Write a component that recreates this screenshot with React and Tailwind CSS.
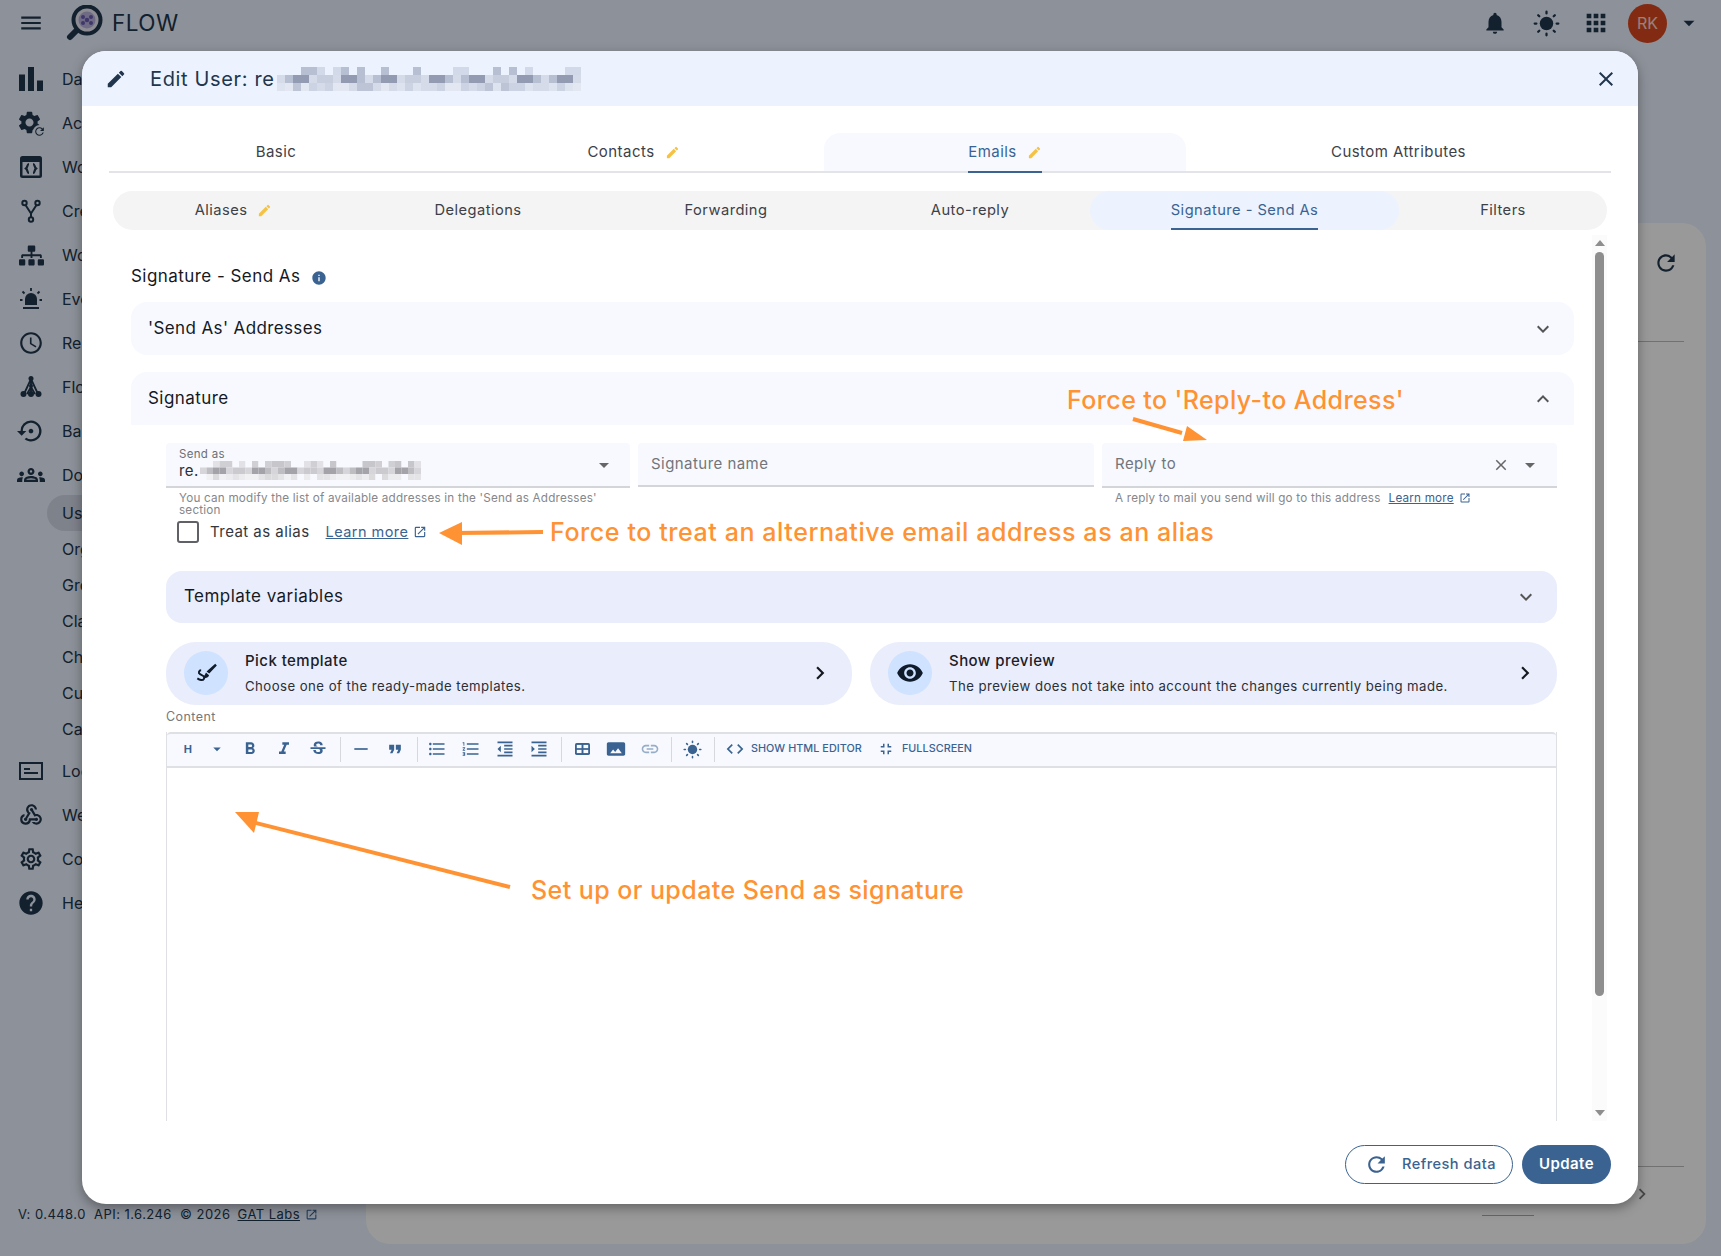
import React from 'react';
import {
  MdMenu, MdBarChart, MdSettings, MdRefresh, MdOutlineAccessTime, MdSettingsBackupRestore, MdOutlineGroups,
  MdWebhook, MdOutlineSettings, MdHelp, MdNotifications, MdApps, MdArrowDropDown, MdEdit, MdClose, MdInfo,
  MdExpandMore, MdExpandLess, MdOutlineOpenInNew, MdChevronRight, MdVisibility, MdFormatBold, MdFormatItalic,
  MdStrikethroughS, MdHorizontalRule, MdFormatQuote, MdFormatListBulleted, MdFormatListNumbered,
  MdFormatIndentDecrease, MdFormatIndentIncrease, MdPanorama, MdLink, MdCode, MdFullscreenExit,
} from 'react-icons/md';
import { FaSitemap } from 'react-icons/fa';

const Sun = ({ className }) => (
  <svg viewBox="0 0 24 24" className={className} fill="currentColor">
    <circle cx="12" cy="12" r="6" />
    <g stroke="currentColor" strokeWidth="2" strokeLinecap="round">
      <path d="M12 1.5v1.5M12 21v1.5M1.5 12H3M21 12h1.5M4.6 4.6l1 1M18.4 18.4l1 1M4.6 19.4l1-1M18.4 5.6l1-1" />
    </g>
  </svg>
);

const Logo = () => (
  <svg viewBox="0 0 37 36" className="w-[37px] h-[36px]">
    <path d="M10 26L4 32" stroke="#21364d" strokeWidth="6" strokeLinecap="round" />
    <circle cx="21" cy="15" r="13.5" fill="#eceaf6" stroke="#21364d" strokeWidth="4" />
    <circle cx="21" cy="15" r="8.5" fill="#b9b3dc" />
    <g fill="#6a5bb0">
      <circle cx="17" cy="12" r="2" />
      <circle cx="25" cy="12" r="2" />
      <circle cx="21" cy="15" r="2.2" />
      <circle cx="17" cy="18" r="2" />
      <circle cx="25" cy="18" r="2" />
    </g>
  </svg>
);

const CogSync = () => (
  <span className="relative block w-[26px] h-[26px]">
    <MdSettings className="w-[27px] h-[27px] -ml-[2px] -mt-[1px]" />
    <span className="absolute right-[-2px] bottom-[-2px] rounded-full bg-[#ebf2ff]">
      <MdRefresh className="w-[13px] h-[13px]" />
    </span>
  </span>
);

const CodeWindow = () => (
  <svg viewBox="0 0 24 24" className="w-[24px] h-[24px]">
    <rect x="1" y="1" width="22" height="22" rx="2.5" fill="currentColor" />
    <rect x="3.500" y="7" width="17" height="13.500" fill="#ebf2ff" />
    <path d="M10 9c-2 0-1 3-3 4.500 2 1.500 1 4.500 3 4.500M14 9c2 0 1 3 3 4.500-2 1.500-1 4.500-3 4.500" fill="none" stroke="currentColor" strokeWidth="2.200" />
  </svg>
);

const ForkIcon = () => (
  <svg viewBox="0 0 24 24" className="w-[24px] h-[24px]" fill="none" stroke="currentColor" strokeWidth="2">
    <circle cx="5.500" cy="4" r="2.200" />
    <circle cx="18.500" cy="4" r="2.200" />
    <circle cx="12" cy="20.500" r="2.200" />
    <path d="M6.500 6L12 14.500 17.500 6M12 14.500v3.800" />
  </svg>
);

const Siren = () => (
  <svg viewBox="0 0 24 24" className="w-[24px] h-[24px]" fill="currentColor">
    <path d="M6 18v-6a6 6 0 0 1 12 0v6z" />
    <rect x="4" y="20" width="16" height="2" />
    <path d="M12 1v3M3.500 4.500l2 2M20.500 4.500l-2 2M1 13h2.500M20.500 13H23" stroke="currentColor" strokeWidth="1.800" />
  </svg>
);

const FlowTree = () => (
  <svg viewBox="0 0 24 24" className="w-[24px] h-[24px]" fill="currentColor">
    <path d="M12 4L5 19M12 4v15M12 4l7 15M12 12l-4 7M12 12l4 7" stroke="currentColor" strokeWidth="1.800" fill="none" />
    <circle cx="12" cy="3.500" r="2.500" />
    <circle cx="12" cy="11" r="2" />
    <circle cx="4.500" cy="19" r="3" />
    <circle cx="12" cy="19" r="3" />
    <circle cx="19.500" cy="19" r="3" />
  </svg>
);

const LogBox = () => (
  <svg viewBox="0 0 24 24" className="w-[24px] h-[24px]" fill="none" stroke="currentColor">
    <rect x="1" y="4" width="22" height="16" strokeWidth="2" />
    <path d="M5 10h6M5 14h14" strokeWidth="1.800" />
  </svg>
);

const TableIcon = () => (
  <svg viewBox="0 0 14 11" className="w-[15px] h-[12px]">
    <rect width="14" height="11" rx="1.500" fill="currentColor" />
    <rect x="1.700" y="1.700" width="4.400" height="3" fill="#f7f9ff" />
    <rect x="7.900" y="1.700" width="4.400" height="3" fill="#f7f9ff" />
    <rect x="1.700" y="6.300" width="4.400" height="3" fill="#f7f9ff" />
    <rect x="7.900" y="6.300" width="4.400" height="3" fill="#f7f9ff" />
  </svg>
);

const PickIcon = () => (
  <svg viewBox="0 0 24 24" className="w-[26px] h-[26px]" fill="#0f1a2a">
    <path d="M20.500 3.500l1.500 1.500-7 7.500-2.500-2z" />
    <path d="M12 11.500l2.800 2.500c-.6 2-2.400 3-4.800 2.400l-1-.6c1.500-.6 2-2.500 3-4.300z" />
    <path d="M7.500 9.500c-2 0-3 2.300-1 3.500l3 1.800c2 1.300.4 4-2 3.700-1.300-.2-2.500-.8-3.500-1.500" fill="none" stroke="#0f1a2a" strokeWidth="1.800" />
  </svg>
);

// pixelated block that hides the address in the reference
const Censor = ({ cols, size, rowsShades, className }) => {
  const cells = [];
  rowsShades.forEach((shades, r) => {
    for (let c = 0; c < cols; c++) {
      const v = (c * 7 + r * 13 + ((c * c) % 11) + ((c * (r + 2)) % 5)) % shades.length;
      cells.push(<rect key={`${r}-${c}`} x={c * size} y={r * size} width={size} height={size} fill={shades[v]} />);
    }
  });
  return (
    <svg viewBox={`0 0 ${cols * size} ${rowsShades.length * size}`} width={cols * size} height={rowsShades.length * size} className={className}>
      {cells}
    </svg>
  );
};

const titleShades = [
  ['#ecf2fe', '#b7bfd2', '#ecf2fe', '#d2d9e8', '#ecf2fe'],
  ['#a9b1c6', '#c7cede', '#939bb3', '#d5dbe8', '#b7bfd2'],
  ['#ccd3e2', '#dde3ef', '#bcc4d6', '#e2e7f2', '#d5dbe8'],
];
const fieldShades = [
  ['#f7f9ff', '#cfcfd4', '#e2e2e6', '#f7f9ff', '#c6c6cb'],
  ['#b4b4b9', '#cbcbcf', '#a3a3a9', '#d6d6da', '#bdbdc2'],
  ['#ececee', '#f7f9ff', '#dbdbde', '#f1f1f4', '#e4e4e7'],
];

const navTop = [
  [<MdBarChart className="w-[36px] h-[36px]" />, 'Dashboard'],
  [<CogSync />, 'Activities'],
  [<CodeWindow />, 'Workspace'],
  [<ForkIcon />, 'Create'],
  [<FaSitemap className="w-[25px] h-[25px]" />, 'Workflows'],
  [<Siren />, 'Events'],
  [<MdOutlineAccessTime className="w-[26px] h-[26px]" />, 'Reports'],
  [<FlowTree />, 'Flow'],
  [<MdSettingsBackupRestore className="w-[28px] h-[28px]" />, 'Backups'],
  [<MdOutlineGroups className="w-[28px] h-[28px]" />, 'Domain'],
];
const navSub = ['Users', 'Org Units', 'Groups', 'Classroom', 'Chrome', 'Custom', 'Calendars'];
const navBottom = [
  [<LogBox />, 'Logs'],
  [<MdWebhook className="w-[26px] h-[26px]" />, 'Webhooks'],
  [<MdOutlineSettings className="w-[26px] h-[26px]" />, 'Config'],
  [<MdHelp className="w-[28px] h-[28px]" />, 'Help'],
];

const mainTabs = [
  { label: 'Basic', w: 'w-[334px]' },
  { label: 'Contacts', w: 'w-[381px]', edited: true },
  { label: 'Emails', w: 'w-[362px]', edited: true, active: true },
  { label: 'Custom Attributes', w: 'w-[425px]' },
];
const subTabs = [
  { label: 'Aliases', w: 'w-[241px]', edited: true },
  { label: 'Delegations', w: 'w-[248px]' },
  { label: 'Forwarding', w: 'w-[248px]' },
  { label: 'Auto-reply', w: 'w-[240px]' },
  { label: 'Signature - Send As', w: 'w-[309px]', active: true },
  { label: 'Filters', w: 'w-[208px]' },
];

const ToolBtn = ({ className = '', children }) => (
  <span className={`w-[34px] shrink-0 flex items-center justify-center ${className}`}>{children}</span>
);
const ToolDivider = ({ className = '' }) => <span className={`block w-px h-[25px] bg-[#d6d8de] shrink-0 ${className}`} />;

function Sidebar() {
  return (
    <aside className="w-[366px] shrink-0 pt-[11px] text-[#21364d]">
      {navTop.map(([icon, label]) => (
        <div key={label} className="h-[44px] flex items-center">
          <span className="w-[62px] flex justify-center shrink-0">{icon}</span>
          <span className="text-[16px] whitespace-nowrap">{label}</span>
        </div>
      ))}
      <div className="-mt-[2px] mb-[2px]">
        {navSub.map((label, i) => (
          <div key={label} className={`h-[36px] flex items-center pl-[15px] ml-[47px] mr-[24px] whitespace-nowrap text-[16px] ${i === 0 ? 'bg-[#d3d9e8] rounded-full' : ''}`}>
            {label}
          </div>
        ))}
      </div>
      {navBottom.map(([icon, label]) => (
        <div key={label} className="h-[44px] flex items-center">
          <span className="w-[62px] flex justify-center shrink-0">{icon}</span>
          <span className="text-[16px] whitespace-nowrap">{label}</span>
        </div>
      ))}
    </aside>
  );
}

function Page() {
  return (
    <div className="relative w-[1721px] h-[1256px] bg-[#ebf2ff] overflow-hidden text-[#21364d]">
      <header className="h-[46px] flex items-center">
        <MdMenu className="w-[26px] h-[26px] ml-[18px]" />
        <span className="ml-[22px]"><Logo /></span>
        <span className="ml-[9px] text-[22.5px] leading-none tracking-[0.5px]">FLOW</span>
        <div className="ml-auto flex items-center mr-[19px]">
          <MdNotifications className="w-[26px] h-[26px]" />
          <Sun className="w-[27px] h-[27px] ml-[25px]" />
          <MdApps className="w-[28px] h-[28px] ml-[22px]" />
          <span className="ml-[18px] w-[39px] h-[39px] rounded-full bg-[#d9471f] text-white/80 flex items-center justify-center text-[16px]">RK</span>
          <MdArrowDropDown className="w-[26px] h-[26px] ml-[9px]" />
        </div>
      </header>
      <div className="flex">
        <Sidebar />
        <main className="mt-[177px] w-[1340px] h-[1021px] bg-white rounded-[24px] flex flex-col">
          <div className="h-[80px] flex items-center justify-end pr-[27px]">
            <MdRefresh className="w-[26px] h-[26px]" />
          </div>
          <div className="h-[39px] border-b border-[#bdbdbd] w-[46px] ml-[1272px]" />
          <div className="h-[825px] border-b border-[#bdbdbd] w-[46px] ml-[1272px]" />
          <div className="ml-[1265px] pt-[16px]">
            <MdChevronRight className="w-[22px] h-[22px] text-[#777]" />
          </div>
          <div className="h-px w-[52px] bg-[#aaa] ml-[1116px] mt-[10px]" />
        </main>
      </div>
      <div className="absolute left-[18px] top-[1205px] text-[13px] tracking-[0.45px] whitespace-pre flex items-center">
        V: 0.448.0  API: 1.6.246  © 2026 <span className="underline ml-[3px]">GAT Labs</span>
        <MdOutlineOpenInNew className="w-[13px] h-[13px] ml-[5px] text-[#3a6391]" />
      </div>
    </div>
  );
}

const Tab = ({ tab }) => (
  <div className="flex items-center">
    <span>{tab.label}</span>
    {tab.edited && <MdEdit className="w-[15px] h-[15px] text-[#f5c242] ml-[10px]" />}
  </div>
);

export default function App() {
  return (
    <div className="relative w-[1721px] h-[1256px] overflow-hidden" style={{ fontFamily: 'Inter, "Noto Sans", sans-serif' }}>
      <Page />
      <div className="absolute inset-0 bg-black/40" />

      {/* dialog */}
      <div className="absolute left-[82px] top-[51px] w-[1556px] h-[1153px] bg-white rounded-[24px] overflow-hidden shadow-[0_4px_12px_rgba(0,0,0,0.35)] flex flex-col tracking-[0.45px] text-[#2b2f36]">
        <div className="h-[55px] shrink-0 bg-[#ecf2fe] flex items-center text-[#21364d]">
          <MdEdit className="w-[22px] h-[22px] ml-[23px]" />
          <span className="ml-[23px] text-[20px] leading-none tracking-[0.65px]">Edit User: re</span>
          <Censor cols={38} size={8} rowsShades={titleShades} className="ml-[2px]" />
          <MdClose className="w-[24px] h-[24px] ml-auto mr-[20px]" />
        </div>

        <div className="mx-[27px] mt-[27px] w-[1502px] flex h-[40px] border-b-2 border-[#e2e4e8] text-[15px] shrink-0">
          {mainTabs.map((t) => (
            <div key={t.label} className={`${t.w} flex items-center justify-center ${t.active ? 'bg-[#f7f9ff] rounded-t-[16px] text-[#3a6391]' : 'text-[#3d4147]'}`}>
              <div className={`h-[40px] mb-[-2px] flex items-center border-b-2 ${t.active ? 'border-[#3a6391]' : 'border-transparent'}`}>
                <Tab tab={t} />
              </div>
            </div>
          ))}
        </div>

        <div className="ml-[31px] mt-[18px] w-[1494px] h-[39px] bg-[#f4f4f4] rounded-[20px] flex text-[14.7px] shrink-0">
          {subTabs.map((t) => (
            <div key={t.label} className={`${t.w} flex items-center justify-center ${t.active ? 'bg-[#ecf2fe] rounded-[20px] text-[#3a6391]' : 'text-[#3d4147]'}`}>
              <div className={`h-[39px] pt-[2px] flex items-center border-b-2 ${t.active ? 'border-[#3a6391]' : 'border-transparent'}`}>
                <Tab tab={t} />
              </div>
            </div>
          ))}
        </div>

        <div className="relative mt-[5px] h-[886px] flex shrink-0">
          {/* scroll content */}
          <div className="w-[1510px] overflow-hidden pl-[49px] pr-[18px] pt-[27px]">
            <div className="flex items-center h-[30px] text-[17px] text-[#15191f]">
              Signature - Send As
              <MdInfo className="w-[16px] h-[16px] ml-[11px] text-[#3a6391] mt-[2px]" />
            </div>

            <div className="mt-[10px] h-[53px] bg-[#f7f9ff] rounded-[16px] flex items-center justify-between pl-[17px] pr-[19px] text-[17px] tracking-[0.38px] text-[#15191f]">
              'Send As' Addresses
              <MdExpandMore className="w-[24px] h-[24px] text-[#555]" />
            </div>

            <div className="mt-[17px] h-[53px] bg-[#f7f9ff] rounded-t-[16px] flex items-center justify-between pl-[17px] pr-[19px] text-[17px] text-[#15191f]">
              Signature
              <MdExpandLess className="w-[24px] h-[24px] text-[#555]" />
            </div>

            <div className="ml-[35px] mr-[17px] mt-[18px]">
              <div className="flex gap-[8px]">
                <div className="w-[464px]">
                  <div className="h-[45px] bg-[#f7f9ff] rounded-t-[4px] border-b-2 border-[#d4d5d8] flex items-center pl-[13px] pr-[14px]">
                    <div className="flex-1 min-w-0">
                      <div className="text-[11.5px] leading-[14px] text-[#6d6f73] tracking-[0.3px] -mt-[2px]">Send as</div>
                      <div className="text-[15px] leading-[18px] text-[#2b2f36] flex items-center">
                        re.
                        <Censor cols={34} size={6.5} rowsShades={fieldShades} className="ml-[1px]" />
                      </div>
                    </div>
                    <MdArrowDropDown className="w-[24px] h-[24px] text-[#666]" />
                  </div>
                  <p className="pl-[13px] pt-[4px] text-[11.7px] leading-[12px] text-[#85878b] tracking-[0.2px] w-[450px]">
                    You can modify the list of available addresses in the 'Send as Addresses' section
                  </p>
                </div>
                <div className="w-[456px] h-[44px] bg-[#f7f9ff] rounded-t-[4px] border-b-2 border-[#d4d5d8] flex items-center pl-[13px] text-[15px] text-[#72757a]">
                  Signature name
                </div>
                <div className="w-[455px]">
                  <div className="h-[45px] bg-[#f7f9ff] rounded-t-[4px] border-b-2 border-[#d4d5d8] flex items-center pl-[13px] pr-[15px] text-[15px] text-[#72757a]">
                    <span className="flex-1">Reply to</span>
                    <MdClose className="w-[18px] h-[18px] text-[#666]" />
                    <MdArrowDropDown className="w-[24px] h-[24px] ml-[8px] text-[#666]" />
                  </div>
                  <div className="pl-[13px] pt-[4px] text-[11.7px] leading-[12px] text-[#85878b] tracking-[0.2px] flex items-center">
                    A reply to mail you send will go to this address
                    <span className="ml-[8px] underline text-[#3a6391]">Learn more</span>
                    <MdOutlineOpenInNew className="w-[12px] h-[12px] ml-[5px] text-[#3a6391]" />
                  </div>
                </div>
              </div>

              <div className="flex items-center h-[22px] mt-[5px] text-[15px] text-[#33373d]">
                <span className="ml-[11px] w-[22px] h-[22px] border-2 border-[#5f6166] rounded-[3px]" />
                <span className="ml-[11px]">Treat as alias</span>
                <span className="ml-[16px] text-[14.5px] underline text-[#3a6391]">Learn more</span>
                <MdOutlineOpenInNew className="w-[14px] h-[14px] ml-[5px] text-[#3a6391]" />
              </div>

              <div className="mt-[28px] h-[52px] bg-[#eaedfb] rounded-[16px] flex items-center justify-between pl-[18px] pr-[19px] text-[17px] text-[#15191f]">
                Template variables
                <MdExpandMore className="w-[24px] h-[24px] text-[#555]" />
              </div>

              <div className="mt-[19px] flex gap-[18px]">
                <div className="w-[686px] h-[63px] bg-[#eaedfb] rounded-[30px] flex items-center pl-[18px] pr-[19px]">
                  <span className="w-[44px] h-[44px] -mt-[1px] rounded-full bg-[#cfe2ff] flex items-center justify-center"><PickIcon /></span>
                  <div className="ml-[17px] flex-1">
                    <div className="text-[15px] leading-[20px] -mt-[1px] font-medium text-[#1b2027]">Pick template</div>
                    <div className="text-[13.2px] leading-[18px] mt-[6px] text-[#2b2f36]">Choose one of the ready-made templates.</div>
                  </div>
                  <MdChevronRight className="w-[26px] h-[26px] -mt-[1px] text-[#15191f]" />
                </div>
                <div className="w-[687px] h-[63px] bg-[#eaedfb] rounded-[30px] flex items-center pl-[18px] pr-[19px]">
                  <span className="w-[44px] h-[44px] -mt-[1px] rounded-full bg-[#cfe2ff] flex items-center justify-center"><MdVisibility className="w-[28px] h-[28px] text-[#0f1a2a]" /></span>
                  <div className="ml-[17px] flex-1">
                    <div className="text-[15px] leading-[20px] -mt-[1px] font-medium text-[#1b2027]">Show preview</div>
                    <div className="text-[13.2px] leading-[18px] mt-[6px] text-[#2b2f36]">The preview does not take into account the changes currently being made.</div>
                  </div>
                  <MdChevronRight className="w-[26px] h-[26px] -mt-[1px] text-[#15191f]" />
                </div>
              </div>

              <div className="h-[25px] mb-[2px] flex items-center text-[12.5px] text-[#777]">Content</div>

              {/* editor */}
              <div className="border-x border-[#dfe0e3] h-[500px]">
                <div className="h-[36px] pb-[2px] bg-[#f7f9ff] border-y-2 border-[#dfe0e3] rounded-t-[4px] flex items-center text-[#3a6391]">
                  <span className="w-[14px] ml-[14px] text-center text-[11px] font-bold shrink-0">H</span>
                  <MdArrowDropDown className="w-[18px] h-[18px] ml-[13px] shrink-0" />
                  <ToolBtn className="ml-[7px]"><MdFormatBold className="w-[20px] h-[20px]" /></ToolBtn>
                  <ToolBtn><MdFormatItalic className="w-[20px] h-[20px]" /></ToolBtn>
                  <ToolBtn><MdStrikethroughS className="w-[20px] h-[20px]" /></ToolBtn>
                  <ToolDivider className="ml-[5px]" />
                  <ToolBtn className="ml-[3px]"><MdHorizontalRule className="w-[20px] h-[20px]" /></ToolBtn>
                  <ToolBtn><MdFormatQuote className="w-[20px] h-[20px]" /></ToolBtn>
                  <ToolDivider className="ml-[5px]" />
                  <ToolBtn className="ml-[2px]"><MdFormatListBulleted className="w-[20px] h-[20px]" /></ToolBtn>
                  <ToolBtn><MdFormatListNumbered className="w-[20px] h-[20px]" /></ToolBtn>
                  <ToolBtn><MdFormatIndentDecrease className="w-[20px] h-[20px]" /></ToolBtn>
                  <ToolBtn><MdFormatIndentIncrease className="w-[20px] h-[20px]" /></ToolBtn>
                  <ToolDivider className="ml-[5px]" />
                  <ToolBtn className="ml-[3px]"><TableIcon /></ToolBtn>
                  <ToolBtn><MdPanorama className="w-[20px] h-[20px]" /></ToolBtn>
                  <ToolBtn className="opacity-50"><MdLink className="w-[20px] h-[20px]" /></ToolBtn>
                  <ToolDivider className="ml-[4px]" />
                  <ToolBtn className="ml-[3px]"><Sun className="w-[19px] h-[19px]" /></ToolBtn>
                  <ToolDivider className="ml-[5px]" />
                  <MdCode className="w-[20px] h-[20px] ml-[10px] shrink-0" />
                  <span className="ml-[6px] text-[10.8px] font-medium tracking-[0.05px] mt-[1px]">SHOW HTML EDITOR</span>
                  <MdFullscreenExit className="w-[18px] h-[18px] ml-[15px] shrink-0" />
                  <span className="ml-[7px] text-[10.8px] font-medium tracking-[0.05px] mt-[1px]">FULLSCREEN</span>
                </div>
              </div>
            </div>
          </div>

          {/* scrollbar */}
          <div className="w-[15px] h-[886px] bg-[#fbfbfb] flex flex-col items-center">
            <span className="mt-[5px] w-0 h-0 border-x-[5px] border-x-transparent border-b-[6px] border-b-[#8e8e8e]" />
            <span className="mt-[6px] w-[9px] h-[744px] rounded-full bg-[#8e8e8e]" />
            <span className="mt-auto mb-[5px] w-0 h-0 border-x-[5px] border-x-transparent border-t-[6px] border-t-[#8e8e8e]" />
          </div>
        </div>

        <div className="flex justify-end items-start gap-[9px] pt-[24px] pr-[27px]">
          <button className="w-[168px] h-[39px] rounded-full border border-[#3a6391] text-[#3a6391] text-[14.6px] font-medium flex items-center pl-[18px]">
            <MdRefresh className="w-[25px] h-[25px] mr-[13px]" />
            Refresh data
          </button>
          <button className="w-[89px] h-[39px] rounded-full bg-[#3a6391] text-white text-[15px] font-semibold">Update</button>
        </div>
      </div>

      {/* annotations added over the screenshot */}
      <div className="absolute left-[1067px] top-[382px] text-[25px] font-medium leading-[36px] text-[#ff9233] whitespace-nowrap tracking-[0.4px]">Force to 'Reply-to Address'</div>
      <div className="absolute left-[550px] top-[514px] text-[25px] font-medium leading-[36px] text-[#ff9233] whitespace-nowrap tracking-[0.58px]">Force to treat an alternative email address as an alias</div>
      <div className="absolute left-[531px] top-[872px] text-[25px] font-medium leading-[36px] text-[#ff9233] whitespace-nowrap tracking-[0.43px]">Set up or update Send as signature</div>
      <svg className="absolute inset-0 pointer-events-none" width="1721" height="1256" fill="#ff9233" stroke="none">
        <path d="M1133 419L1182 433" stroke="#ff9233" strokeWidth="4" />
        <path d="M1207 440L1183 441 1187 426z" />
        <path d="M455 533L543 532" stroke="#ff9233" strokeWidth="4" />
        <path d="M439 533L462 522 462 545z" />
        <path d="M510 887L248 821" stroke="#ff9233" strokeWidth="4" />
        <path d="M235 812L259 812 254 833z" />
      </svg>
    </div>
  );
}
